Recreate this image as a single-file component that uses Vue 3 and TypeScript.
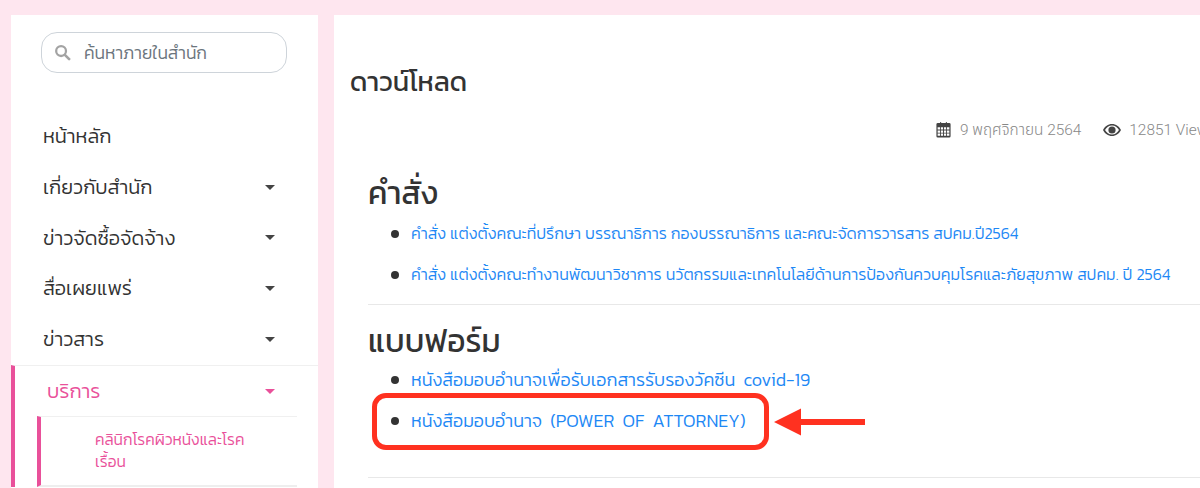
<script setup lang="ts">
interface MenuItem {
  label: string;
  caret: boolean;
}

const menu: MenuItem[] = [
  { label: 'หน้าหลัก', caret: false },
  { label: 'เกี่ยวกับสำนัก', caret: true },
  { label: 'ข่าวจัดซื้อจัดจ้าง', caret: true },
  { label: 'สื่อเผยแพร่', caret: true },
  { label: 'ข่าวสาร', caret: true }
];

const orders: string[] = [
  'คำสั่ง แต่งตั้งคณะที่ปรึกษา บรรณาธิการ กองบรรณาธิการ และคณะจัดการวารสาร สปคม.ปี2564',
  'คำสั่ง แต่งตั้งคณะทำงานพัฒนาวิชาการ นวัตกรรมและเทคโนโลยีด้านการป้องกันควบคุมโรคและภัยสุขภาพ สปคม. ปี 2564'
];
</script>

<template>
  <div class="page">
    <aside class="sidebar">
      <div class="search">
        <svg class="search-icon" viewBox="0 0 18 18" width="17" height="17">
          <circle cx="7.5" cy="7.5" r="5.2" fill="none" stroke="#a3a3a3" stroke-width="2.4" />
          <path d="M11.5 11.5 L16 16" stroke="#a3a3a3" stroke-width="2.8" stroke-linecap="round" />
        </svg>
        <span class="search-text">ค้นหาภายในสำนัก</span>
      </div>

      <nav class="menu">
        <a v-for="item in menu" :key="item.label" class="menu-item">
          <span>{{ item.label }}</span>
          <i v-if="item.caret" class="caret"></i>
        </a>
        <div class="menu-active">
          <a class="menu-item active-head">
            <span>บริการ</span>
            <i class="caret caret-pink"></i>
          </a>
          <div class="submenu">
            <a class="sub-item">คลินิกโรคผิวหนังและโรคเรื้อน</a>
          </div>
        </div>
      </nav>
    </aside>

    <main class="content">
      <h1 class="title">ดาวน์โหลด</h1>

      <div class="meta">
        <svg viewBox="0 0 18 18" width="17" height="18">
          <path fill="#444" fill-rule="evenodd" d="M3 1.5h2.5V0.6h1v.9h5v-.9h1v.9H15a1.5 1.5 0 0 1 1.5 1.5v12.5a1.5 1.5 0 0 1-1.5 1.5H3a1.5 1.5 0 0 1-1.5-1.5V3A1.5 1.5 0 0 1 3 1.5zM2.8 6.2v2.4h2.6V6.2zm3.5 0v2.4h2.2V6.2zm3.2 0v2.4h2.2V6.2zm3.1 0v2.4h2.6V6.2zM2.8 9.5v2.3h2.6V9.5zm3.5 0v2.3h2.2V9.5zm3.2 0v2.3h2.2V9.5zm3.1 0v2.3h2.6V9.5zM2.8 12.7v2.5h2.6v-2.5zm3.5 0v2.5h2.2v-2.5zm3.2 0v2.5h2.2v-2.5zm3.1 0v2.5h2.6v-2.5z" />
        </svg>
        <span class="meta-text">9 พฤศจิกายน 2564</span>
        <svg class="eye" viewBox="0 0 18 12" width="18" height="12">
          <path fill="#444" fill-rule="evenodd" d="M9 0C5 0 1.800 2.400 0 6c1.800 3.600 5 6 9 6s7.200-2.400 9-6c-1.800-3.600-5-6-9-6zM9 1.500c3 0 5.500 1.800 7 4.500-1.500 2.700-4 4.500-7 4.500S3.500 8.700 2 6c1.500-2.700 4-4.500 7-4.500z" />
          <circle cx="9" cy="6" r="3.600" fill="#444" />
        </svg>
        <span class="meta-text">12851 Views</span>
      </div>

      <section class="block">
        <h2 class="heading">คำสั่ง</h2>
        <ul class="list list-orders">
          <li v-for="text in orders" :key="text"><a>{{ text }}</a></li>
        </ul>
      </section>

      <section class="block block-form">
        <h2 class="heading">แบบฟอร์ม</h2>
        <ul class="list list-forms">
          <li><a>หนังสือมอบอำนาจเพื่อรับเอกสารรับรองวัคซีน covid-19</a></li>
          <li class="marked">
            <a>หนังสือมอบอำนาจ (POWER OF ATTORNEY)</a>
            <span class="red-box"></span>
            <svg class="red-arrow" viewBox="0 0 92 28" width="92" height="28">
              <path d="M0 14 L27 0.500 V11 H91 V17 H27 V27.500 Z" fill="#ff3120" />
            </svg>
          </li>
        </ul>
      </section>

      <div class="block block-end"></div>
    </main>
  </div>
</template>

<style>
html,
body {
  margin: 0;
  background: #fee6ef;
}
</style>

<style scoped>
.page {
  display: flex;
  align-items: flex-start;
  gap: 16px;
  width: 1200px;
  height: 488px;
  overflow: hidden;
  box-sizing: border-box;
  padding: 15px 0 0 11px;
  background: #fee6ef;
  color: #333;
  font-family: Kanit, "Noto Sans Thai", "Noto Sans", "Liberation Sans", sans-serif;
  font-weight: 300;
}

.sidebar {
  flex: 0 0 307px;
  height: 473px;
  background: #fff;
  overflow: hidden;
}

.search {
  display: flex;
  align-items: center;
  box-sizing: border-box;
  width: 246px;
  height: 41px;
  margin: 17px 0 0 30px;
  padding-left: 12px;
  border: 1px solid #ced4da;
  border-radius: 16px;
}

.search-text {
  margin-left: 13px;
  font-size: 17.5px;
  color: #6c757d;
}

.menu {
  margin-top: 38px;
}

.menu-item {
  display: flex;
  align-items: center;
  justify-content: space-between;
  height: 50.7px;
  padding: 0 43px 0 32px;
  font-size: 20px;
  color: #333;
}

.caret {
  width: 0;
  height: 0;
  border-left: 5.500px solid transparent;
  border-right: 5.500px solid transparent;
  border-top: 5.500px solid #444;
}

.caret-pink {
  border-top-color: #e9509a;
}

.menu-active {
  margin-top: 1px;
  border-top: 1px solid #f0f0f0;
  border-left: 4px solid #e9509a;
}

.active-head {
  height: 50px;
  padding: 0 43px 0 32px;
  color: #e9509a;
}

.submenu {
  margin: 0 21px 0 22px;
  border-top: 1px solid #f0f0f0;
  border-left: 4px solid #e9509a;
  border-bottom: 2px solid #eee;
}

.sub-item {
  display: block;
  box-sizing: border-box;
  width: 215px;
  padding: 12px 0 12px 54px;
  font-size: 15.6px;
  line-height: 22px;
  color: #e9509a;
}

.content {
  flex: 0 0 900px;
  box-sizing: border-box;
  height: 473px;
  padding: 49px 0 0 16px;
  background: #fff;
  overflow: hidden;
}

.title {
  margin: 0;
  font-size: 27px;
  font-weight: 400;
  line-height: 36px;
  color: #333;
}

.meta {
  display: flex;
  align-items: center;
  height: 24px;
  margin-top: 18px;
  padding-left: 585px;
  white-space: nowrap;
}

.meta-text {
  margin-left: 8px;
  font-family: Roboto, "Noto Sans Thai", "Noto Sans", sans-serif;
  font-size: 15.4px;
  color: #888;
}

.eye {
  margin-left: 22px;
}

.block {
  margin: 0 0 0 18px;
}

.heading {
  margin: 29px 0 0;
  font-size: 31.6px;
  font-weight: 400;
  line-height: 44px;
  color: #333;
}

.list {
  margin: 0;
  padding: 0 0 0 23px;
  list-style: none;
  white-space: nowrap;
}

.list li {
  display: flex;
  gap: 12px;
  height: 41px;
}

.list li::before {
  content: "";
  flex: none;
  width: 8px;
  height: 8px;
  border-radius: 50%;
  background: #333;
}

.list a {
  color: #1e88f5;
}

.list-orders {
  padding-top: 6px;
  padding-bottom: 1px;
  font-size: 16px;
  word-spacing: 0.4px;
  border-bottom: 1px solid #e8e8e8;
}

.list-orders li {
  line-height: 24px;
}

.list-orders li::before {
  margin-top: 9px;
}

.block-form .heading {
  margin-top: 14px;
}

.list-forms {
  padding-top: 4px;
  font-size: 18px;
  word-spacing: 4px;
}

.list-forms li {
  line-height: 26px;
}

.list-forms li::before {
  margin-top: 9px;
}

.marked {
  position: relative;
}

.red-box {
  position: absolute;
  left: -19px;
  top: -15px;
  width: 397px;
  height: 57px;
  box-sizing: border-box;
  border: 5px solid #ff3120;
  border-radius: 14px;
}

.red-arrow {
  position: absolute;
  left: 383px;
  top: 0;
}

.block-end {
  margin-top: 28px;
  border-top: 1px solid #e8e8e8;
}
</style>
